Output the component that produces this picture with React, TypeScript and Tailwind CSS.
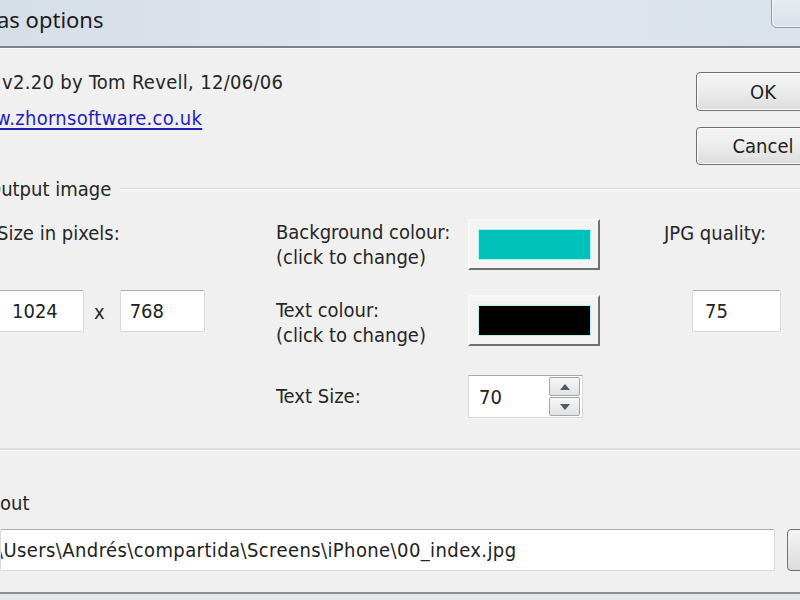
import React from "react";

const ui = { fontFamily: '"DejaVu Sans Condensed", "DejaVu Sans", sans-serif' };

function TextBox({ value, className }: { value: string; className: string }) {
  return (
    <div
      className={`flex items-center rounded-[2px] border border-[#d6d8de] border-t-[#a9abb1] bg-white text-[20px] text-[#222] ${className}`}
    >
      {value}
    </div>
  );
}

function ColourButton({ colour, className }: { colour: string; className: string }) {
  return (
    <div
      className={`flex h-[51px] w-[132px] items-center justify-center border-2 border-[#f8f8f8] border-b-[#707070] border-r-[#707070] bg-[#f3f3f3] ${className}`}
    >
      <div
        className="h-[31px] w-[113px] border border-[#aef0ee]"
        style={{ backgroundColor: colour }}
      />
    </div>
  );
}

function PushButton({ label, className }: { label: string; className: string }) {
  return (
    <div
      className={`flex w-[134px] items-center justify-center rounded-[4px] border border-[#707070] bg-gradient-to-b from-[#f4f4f4] via-[#ececec] to-[#dcdcdc] text-[20px] text-[#1e1e1e] shadow-[inset_0_0_0_1px_#fcfcfc] ${className}`}
    >
      {label}
    </div>
  );
}

function Triangle({ up }: { up?: boolean }) {
  return (
    <svg width="10" height="6" viewBox="0 0 10 6">
      <path d={up ? "M0 6 L5 0 L10 6 Z" : "M0 0 L5 6 L10 0 Z"} fill="#4d5a6c" />
    </svg>
  );
}

export default function App() {
  return (
    <div className="relative h-[600px] w-[800px] overflow-hidden bg-[#f0f0f0]" style={ui}>
      {/* title bar */}
      <div className="relative h-[46px] bg-gradient-to-r from-[#d6dee8] via-[#dfe5ec] to-[#dbe3ea]">
        <div
          className="absolute left-[-3px] top-[4px] text-[22px] leading-[30px] text-[#1c1c1c]"
          style={{ fontFamily: '"Noto Sans", "Open Sans", sans-serif' }}
        >
          as options
        </div>
        <div className="absolute left-[771px] top-[-4px] h-[32px] w-[50px] rounded-bl-[6px] border border-[#8c98a6] bg-gradient-to-b from-[#e8edf2] to-[#d9e0e8] shadow-[inset_1px_-1px_0_#f6f8fa]" />
      </div>
      <div className="h-[2px] bg-[#7c8288]" />
      <div className="h-px bg-[#fafafa]" />

      {/* about + buttons */}
      <div className="flex h-[128px]">
        <div className="flex-1 pl-[2px] pt-[21px] text-[20px] leading-[24px] tracking-[0.3px] text-[#262626]">
          <div>v2.20 by Tom Revell, 12/06/06</div>
          <div className="ml-[-36px] mt-[12px] text-[#1f1fbf] underline underline-offset-[3px]">
            www.zhornsoftware.co.uk
          </div>
        </div>
        <div className="w-[104px] pt-[23px]">
          <PushButton label="OK" className="h-[39px]" />
          <PushButton label="Cancel" className="mt-[16px] h-[38px]" />
        </div>
      </div>

      {/* output image group */}
      <div className="flex items-center">
        <div className="ml-[-13px] text-[20px] leading-[24px] text-[#262626]">Output image</div>
        <div className="ml-[9px] flex-1 border-t border-b border-t-[#d5d5d5] border-b-white" />
      </div>

      <div className="mt-[18px] flex h-[51px]">
        <div className="ml-[-3px] w-[279px] pt-[2px] text-[20px] leading-[24px] text-[#262626]">
          Size in pixels:
        </div>
        <div className="w-[192px] pt-[1px] text-[20px] leading-[25px] text-[#262626]">
          <div>Background colour:</div>
          <div>(click to change)</div>
        </div>
        <ColourButton colour="#00c2ba" className="" />
        <div className="ml-[64px] pt-[2px] text-[20px] leading-[24px] text-[#262626]">JPG quality:</div>
      </div>

      <div className="mt-[20px] flex h-[55px]">
        <div className="flex w-[276px] items-start">
          <TextBox value="1024" className="ml-[-4px] h-[42px] w-[88px] pl-[15px]" />
          <div className="ml-[10px] pt-[10px] text-[20px] leading-[24px] text-[#262626]">x</div>
          <TextBox value="768" className="ml-[15px] h-[42px] w-[85px] pl-[9px]" />
        </div>
        <div className="w-[192px] pt-[8px] text-[20px] leading-[25px] text-[#262626]">
          <div>Text colour:</div>
          <div>(click to change)</div>
        </div>
        <ColourButton colour="#000000" className="mt-[5px] h-[50px]" />
        <TextBox value="75" className="ml-[92px] h-[42px] w-[89px] pl-[12px]" />
      </div>

      <div className="mt-[30px] flex h-[43px]">
        <div className="ml-[276px] w-[192px] pt-[9px] text-[20px] leading-[24px] text-[#262626]">
          Text Size:
        </div>
        <div className="flex h-[43px] w-[115px] items-center border border-[#d6d8de] border-t-[#a9abb1] bg-white pl-[10px] pr-[2px]">
          <div className="flex-1 text-[20px] text-[#222]">70</div>
          <div className="flex h-[39px] w-[31px] flex-col gap-[1px]">
            <div className="flex flex-1 items-center justify-center rounded-[2px] border border-[#a6a6a6] bg-gradient-to-b from-[#f6f6f6] to-[#e2e2e2]">
              <Triangle up />
            </div>
            <div className="flex flex-1 items-center justify-center rounded-[2px] border border-[#a6a6a6] bg-gradient-to-b from-[#f6f6f6] to-[#e2e2e2]">
              <Triangle />
            </div>
          </div>
        </div>
      </div>

      <div className="mt-[30px] border-t-2 border-b border-t-[#dcdcdc] border-b-white" />

      {/* output file */}
      <div className="mt-[40px] text-[20px] leading-[24px] text-[#262626]">out</div>
      <div className="mt-[14px] flex h-[42px]">
        <div className="flex h-[42px] w-[775px] shrink-0 items-center overflow-hidden rounded-[2px] border border-[#d6d8de] border-t-[#a9abb1] bg-white text-[20px] tracking-[0.4px] text-[#222]">
          <span className="ml-[-4px] whitespace-nowrap">\Users\Andrés\compartida\Screens\iPhone\00_index.jpg</span>
        </div>
        <div className="ml-[12px] h-[42px] w-[40px] shrink-0 rounded-[4px] border border-[#707070] bg-gradient-to-b from-[#f4f4f4] to-[#dcdcdc]" />
      </div>

      <div className="mt-[21px] h-[2px] bg-[#8a8e92]" />
      <div className="h-[10px] bg-[#e4e6e8]" />
    </div>
  );
}
